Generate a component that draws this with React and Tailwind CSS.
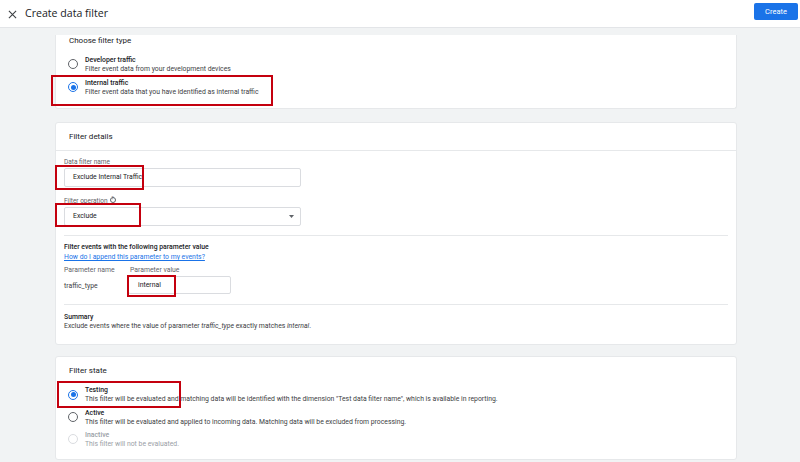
import React from "react";

const font = { fontFamily: "Roboto, 'Noto Sans', Arial, sans-serif" };

const Radio = ({ checked, disabled }) => (
  <div
    className={`w-[10px] h-[10px] rounded-full border flex items-center justify-center shrink-0 ${
      checked ? "border-[#1a73e8]" : disabled ? "border-[#dadce0]" : "border-[#5f6368]"
    }`}
  >
    {checked && <div className="w-[5px] h-[5px] rounded-full bg-[#1a73e8]" />}
  </div>
);

const Option = ({ title, desc, checked, disabled, rowClass }) => (
  <div className={`flex items-center gap-[7px] ${rowClass}`}>
    <Radio checked={checked} disabled={disabled} />
    <div className="flex flex-col">
      <div className={`text-[6.9px] leading-[10px] font-medium ${disabled ? "text-[#9aa0a6]" : "text-[#202124]"}`}>{title}</div>
      <div className={`text-[6.85px] leading-[9px] ${disabled ? "text-[#9aa0a6]" : "text-[#3c4043]"}`}>{desc}</div>
    </div>
  </div>
);

const RedBox = ({ cls }) => (
  <div className={`absolute border-[2.5px] border-[#c4000e] pointer-events-none ${cls}`} />
);

export default function App() {
  return (
    <div className="relative w-[800px] h-[462px] overflow-hidden bg-[#f1f3f4]" style={font}>
      {/* header */}
      <div className="h-[28px] bg-white border-b border-[#e3e5e8] flex items-center pl-[8px] pr-[2px]">
        <svg width="9" height="9" viewBox="0 0 10 10" className="mt-[1px]">
          <path d="M1 1 L9 9 M9 1 L1 9" stroke="#3c4043" strokeWidth="1.2" />
        </svg>
        <div className="ml-[8px] text-[10.6px] text-[#202124]" style={{ fontFamily: "'Open Sans', Roboto, sans-serif" }}>
          Create data filter
        </div>
        <div className="ml-auto w-[44px] h-[17px] mb-[4px] rounded-[2px] bg-[#1a73e8] text-white text-[7.5px] flex items-center justify-center">
          Create
        </div>
      </div>

      <div className="pl-[55px]">
        {/* card 1 */}
        <div className="w-[682px] bg-white rounded-b-[3px] border-x border-b border-[#e6e8ea] pl-[12px] pb-[11px]">
          <div className="h-[12px] mt-[7px] ml-[1px] text-[8px] leading-[12px] text-[#202124]">Choose filter type</div>
          <Option
            rowClass="mt-[7px] h-[20px]"
            title="Developer traffic"
            desc="Filter event data from your development devices"
          />
          <Option
            rowClass="mt-[3px] h-[20px]"
            checked
            title="Internal traffic"
            desc="Filter event data that you have identified as internal traffic"
          />
        </div>

        {/* card 2 */}
        <div className="mt-[13px] w-[682px] h-[223px] bg-white rounded-[3px] border border-[#e6e8ea]">
          <div className="h-[28px] border-b border-[#e6e8ea] flex items-center pl-[13px] text-[8px] text-[#202124]">
            Filter details
          </div>
          <div className="px-[8px]">
            <div className="mt-[6px] h-[10px] text-[6.5px] leading-[10px] text-[#5f6368]">Data filter name</div>
            <div className="mt-[1px] w-[237px] h-[19px] border border-[#dadce0] rounded-[2px] flex items-center pl-[8px] text-[6.85px] text-[#202124]">
              Exclude Internal Traffic
            </div>
            <div className="mt-[9px] h-[10px] text-[6.5px] leading-[10px] text-[#5f6368] flex items-center gap-[2px]">
              Filter operation
              <span className="inline-flex w-[6px] h-[6px] rounded-full border border-[#5f6368] text-[4.5px] items-center justify-center leading-none -mt-[3px]">?</span>
            </div>
            <div className="mt-[1px] w-[237px] h-[19px] border border-[#dadce0] rounded-[2px] flex items-center pl-[8px] pr-[6px] text-[6.85px] text-[#202124]">
              Exclude
              <svg width="5" height="3" viewBox="0 0 5 3" className="ml-auto">
                <path d="M0 0 L5 0 L2.5 3 Z" fill="#5f6368" />
              </svg>
            </div>
            <div className="mt-[9px] border-t border-[#e6e8ea]" />
            <div className="mt-[6px] h-[10px] text-[6.85px] leading-[10px] font-medium text-[#202124]">
              Filter events with the following parameter value
            </div>
            <div className="h-[10px] text-[6.85px] leading-[10px] text-[#1a73e8] underline">
              How do I append this parameter to my events?
            </div>
            <div className="mt-[3px] h-[10px] flex text-[6.85px] leading-[10px] text-[#5f6368]">
              <div className="w-[66px]">Parameter name</div>
              <div>Parameter value</div>
            </div>
            <div className="mt-[1px] flex items-center">
              <div className="w-[64px] text-[6.85px] text-[#3c4043] mt-[2px]">traffic_type</div>
              <div className="w-[103px] h-[18px] border border-[#dadce0] rounded-[2px] flex items-center pl-[9px] text-[6.85px] text-[#202124]">
                internal
              </div>
            </div>
            <div className="mt-[10px] border-t border-[#e6e8ea]" />
            <div className="mt-[7px] h-[10px] text-[6.85px] leading-[10px] font-medium text-[#202124]">Summary</div>
            <div className="h-[9px] text-[6.85px] leading-[9px] text-[#3c4043]">
              Exclude events where the value of parameter <i>traffic_type</i> exactly matches <i>internal</i>.
            </div>
          </div>
        </div>

        {/* card 3 */}
        <div className="mt-[11px] w-[682px] h-[104px] bg-white rounded-[3px] border border-[#e6e8ea] pl-[12px]">
          <div className="mt-[8px] ml-[1px] h-[12px] text-[8px] leading-[12px] text-[#202124]">Filter state</div>
          <Option
            rowClass="mt-[8px] h-[19px]"
            checked
            title="Testing"
            desc={'This filter will be evaluated and matching data will be identified with the dimension "Test data filter name", which is available in reporting.'}
          />
          <Option
            rowClass="mt-[3.5px] h-[19px]"
            title="Active"
            desc="This filter will be evaluated and applied to incoming data. Matching data will be excluded from processing."
          />
          <Option
            rowClass="mt-[3px] h-[19px]"
            disabled
            title="Inactive"
            desc="This filter will not be evaluated."
          />
        </div>
      </div>

      {/* annotation boxes */}
      <RedBox cls="left-[51px] top-[75px] w-[222px] h-[31px]" />
      <RedBox cls="left-[55px] top-[165px] w-[89px] h-[25px]" />
      <RedBox cls="left-[55px] top-[203px] w-[86px] h-[24px]" />
      <RedBox cls="left-[127px] top-[275px] w-[49px] h-[22px]" />
      <RedBox cls="left-[57px] top-[381px] w-[124px] h-[27px]" />
    </div>
  );
}
